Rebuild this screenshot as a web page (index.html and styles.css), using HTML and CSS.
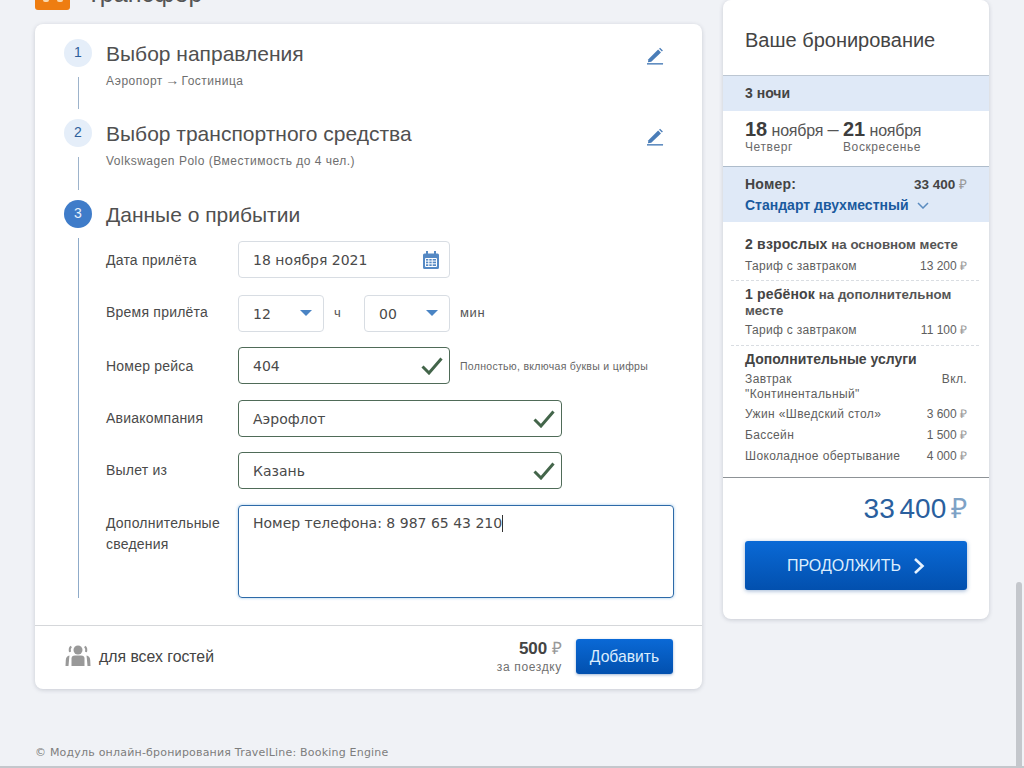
FILE: index.html
```html
<!DOCTYPE html>
<html lang="ru">
<head>
<meta charset="utf-8">
<title>Трансфер</title>
<link rel="stylesheet" href="styles.css">
</head>
<body>
<div class="page">
  <main class="main">
    <div class="head">
      <div class="badge"><i class="spot"></i><i class="spot"></i></div>
      <div class="head-title">Трансфер</div>
    </div>
    <section class="card">
      <div class="steps">
        <div class="step step-a">
          <div class="rail"><div class="num">1</div><div class="line"></div></div>
          <div class="step-body">
            <div class="step-title">Выбор направления</div>
            <div class="step-sub">Аэропорт <span class="arrow">→</span> Гостиница</div>
          </div>
          <svg class="edit" viewBox="0 0 18 18"><path d="M1.500 12.500 11.800 2.200 14.800 5.200 4.500 15 1 15.500Z" fill="#4a7db8"/><path d="M12.800 1.200 13.800 .2 16.800 3.200 15.800 4.200Z" fill="#4a7db8"/><path d="M0 17.300H17" stroke="#4a7db8" stroke-width="1.500"/></svg>
        </div>
        <div class="step step-b">
          <div class="rail"><div class="num">2</div><div class="line"></div></div>
          <div class="step-body">
            <div class="step-title">Выбор транспортного средства</div>
            <div class="step-sub">Volkswagen Polo (Вместимость до 4 чел.)</div>
          </div>
          <svg class="edit edit-low" viewBox="0 0 18 18"><path d="M1.500 12.500 11.800 2.200 14.800 5.200 4.500 15 1 15.500Z" fill="#4a7db8"/><path d="M12.800 1.200 13.800 .2 16.800 3.200 15.800 4.200Z" fill="#4a7db8"/><path d="M0 17.300H17" stroke="#4a7db8" stroke-width="1.500"/></svg>
        </div>
        <div class="step">
          <div class="rail"><div class="num num-active">3</div><div class="line line-active"></div></div>
          <div class="step-body">
            <div class="step-title">Данные о прибытии</div>
            <div class="form">
              <div class="row row-date">
                <div class="label label-low">Дата прилёта</div>
                <div class="field w212"><span>18 ноября 2021</span>
                  <svg class="cal" viewBox="0 0 16 18"><path d="M1.500 2.500H14.500A1.500 1.500 0 0 1 16 4V16.500A1.500 1.500 0 0 1 14.500 18H1.500A1.500 1.500 0 0 1 0 16.500V4A1.500 1.500 0 0 1 1.500 2.500Z" fill="#5589c4"/><rect x="3" y="0" width="2" height="4" fill="#5589c4"/><rect x="11" y="0" width="2" height="4" fill="#5589c4"/><path d="M2.500 7.500H13.500V15.500H2.500ZM2.500 10.100H13.500M2.500 12.800H13.500M5.800 7.500V15.500M9.200 7.500V15.500" fill="none" stroke="#fff" stroke-width="1"/></svg>
                </div>
              </div>
              <div class="row">
                <div class="label label-high">Время прилёта</div>
                <div class="field w86"><span>12</span><i class="tri"></i></div>
                <div class="unit unit-h">ч</div>
                <div class="field w86"><span>00</span><i class="tri"></i></div>
                <div class="unit">мин</div>
              </div>
              <div class="row row-c">
                <div class="label label-low">Номер рейса</div>
                <div class="field ok w212"><span>404</span>
                  <svg class="check" viewBox="0 0 22 18"><path d="M1.500 9.500 8 16 20.500 1.500" fill="none" stroke="#43654a" stroke-width="3"/></svg>
                </div>
                <div class="hint">Полностью, включая буквы и цифры</div>
              </div>
              <div class="row">
                <div class="label">Авиакомпания</div>
                <div class="field ok w324"><span>Аэрофлот</span>
                  <svg class="check" viewBox="0 0 22 18"><path d="M1.500 9.500 8 16 20.500 1.500" fill="none" stroke="#43654a" stroke-width="3"/></svg>
                </div>
              </div>
              <div class="row row-e">
                <div class="label">Вылет из</div>
                <div class="field ok w324"><span>Казань</span>
                  <svg class="check" viewBox="0 0 22 18"><path d="M1.500 9.500 8 16 20.500 1.500" fill="none" stroke="#43654a" stroke-width="3"/></svg>
                </div>
              </div>
              <div class="row row-area">
                <div class="label label-area">Дополнительные сведения</div>
                <div class="area"><span>Номер телефона: 8 987 65 43 210</span><i class="caret"></i></div>
              </div>
            </div>
          </div>
        </div>
      </div>
      <div class="card-foot">
        <svg class="people" viewBox="0 0 26 22"><circle cx="13" cy="5" r="4.500" fill="#999"/><path d="M6.500 21V13.500Q6.500 10.500 10 10.500H16Q19.500 10.500 19.500 13.500V21Z" fill="#999"/><path d="M6.300 1.500Q4 3 5 7M19.700 1.500Q22 3 21 7" fill="none" stroke="#999" stroke-width="2"/><path d="M4.500 10.500Q1 11 .8 15L.5 21H3.500L4.200 13ZM21.500 10.500Q25 11 25.200 15L25.500 21H22.500L21.800 13Z" fill="#999"/></svg>
        <div class="guests">для всех гостей</div>
        <div class="trip">
          <div class="trip-price">500 <span class="rub">₽</span></div>
          <div class="trip-note">за поездку</div>
        </div>
        <div class="add">Добавить</div>
      </div>
    </section>
    <footer class="copy">© Модуль онлайн-бронирования TravelLine: Booking Engine</footer>
  </main>
  <aside class="side">
    <div class="side-title">Ваше бронирование</div>
    <div class="band nights">3 ночи</div>
    <div class="dates">
      <div class="date date-from"><div class="date-main"><b>18</b> ноября <span class="dash">–</span></div><div class="date-day">Четверг</div></div>
      <div class="date"><div class="date-main"><b>21</b> ноября</div><div class="date-day">Воскресенье</div></div>
    </div>
    <div class="band room">
      <div class="between room-top"><b>Номер:</b><span class="room-price">33 400 <span class="rub">₽</span></span></div>
      <div class="room-name">Стандарт двухместный
        <svg class="chev" viewBox="0 0 12 7"><path d="M1 1 6 6 11 1" fill="none" stroke="#5b8cc0" stroke-width="1.500"/></svg>
      </div>
    </div>
    <div class="group group-a">
      <div class="g-title"><b>2 взрослых</b> на основном месте</div>
      <div class="between g-row"><span>Тариф с завтраком</span><span class="amount">13 200 <span class="rub">₽</span></span></div>
    </div>
    <div class="group group-b">
      <div class="g-title"><b>1 ребёнок</b> на дополнительном месте</div>
      <div class="between g-row"><span>Тариф с завтраком</span><span class="amount">11 100 <span class="rub">₽</span></span></div>
    </div>
    <div class="extras">
      <div class="x-title">Дополнительные услуги</div>
      <div class="between x-row x-first"><span class="x-wrap">Завтрак "Континентальный"</span><span>Вкл.</span></div>
      <div class="between x-row"><span>Ужин «Шведский стол»</span><span class="amount">3 600 <span class="rub">₽</span></span></div>
      <div class="between x-row"><span>Бассейн</span><span class="amount">1 500 <span class="rub">₽</span></span></div>
      <div class="between x-row"><span>Шоколадное обертывание</span><span class="amount">4 000 <span class="rub">₽</span></span></div>
    </div>
    <div class="total">33 400 <span class="rub-total">₽</span></div>
    <div class="go">Продолжить
      <svg class="go-chev" viewBox="0 0 12 18"><path d="M2 2 9.500 9 2 16" fill="none" stroke="#e6f2ff" stroke-width="2.600"/></svg>
    </div>
  </aside>
</div>
<div class="vscroll"></div>
<div class="hscroll"></div>
</body>
</html>
```
FILE: styles.css
```css
html, body { margin: 0; padding: 0; height: 768px; overflow: hidden; }
body { background: #f0f2f6; font-family: "Liberation Sans", Arial, sans-serif; color: #444; position: relative; }
.page { display: flex; align-items: flex-start; gap: 21px; padding-left: 35px; }
.main { width: 667px; flex: none; }
.head { display: flex; gap: 16px; height: 36px; margin-top: -26px; margin-bottom: 14px; }
.badge { width: 35px; height: 36px; background: #ee7d11; border-radius: 3px; display: flex; justify-content: center; gap: 8px; padding-top: 24px; box-sizing: border-box; }
.spot { width: 6px; height: 4px; border-radius: 2px; background: #f8d9b0; }
.head-title { font-size: 25px; line-height: 28px; color: #555; padding-top: 5px; }
.card { background: #fff; border-radius: 8px; box-shadow: 0 1px 4px rgba(60, 70, 90, .22); height: 665px; display: flex; flex-direction: column; }
.steps { padding: 15px 38px 27px 29px; border-bottom: 1px solid #d5d7da; flex: 1; }
.step { display: flex; gap: 14px; }
.step-a { height: 80px; }
.step-b { height: 81px; }
.rail { width: 28px; flex: none; display: flex; flex-direction: column; align-items: center; }
.num { width: 28px; height: 28px; border-radius: 50%; background: #e5eef9; color: #2e5f9c; font-size: 14px; line-height: 26px; text-align: center; }
.num-active { background: #3f7cc9; color: #e8f1fb; }
.line { flex: 1; width: 1px; background: #9db3cb; margin: 10px 0; }
.line-active { margin-bottom: 0; background: #8fabc9; }
.step-body { flex: 1; min-width: 0; }
.step-title { font-size: 21px; line-height: 30px; color: #505050; }
.step-sub { font-size: 12px; line-height: 16px; color: #6e6e6e; margin-top: 4px; letter-spacing: .5px; }
.arrow { font-size: 14px; line-height: 12px; letter-spacing: 0; margin: 0 -1.500px; }
.edit { width: 17px; height: 18px; margin-top: 8px; flex: none; }
.edit-low { margin-top: 9px; }
.form { display: flex; flex-direction: column; margin-top: 11px; margin-right: -10px; }
.row { display: flex; align-items: center; height: 37px; margin-bottom: 15px; }
.row-date { margin-bottom: 17px; }
.row-c, .row-e { margin-bottom: 16px; }
.row-area { height: 93px; margin-bottom: 0; align-items: flex-start; }
.label { width: 132px; flex: none; font-size: 14px; line-height: 21px; color: #4a4a4a; letter-spacing: .22px; }
.label-low { padding-top: 2px; }
.label-high { padding-bottom: 2px; }
.label-area { padding-top: 8px; }
.field { box-sizing: border-box; height: 37px; border: 1px solid #d8dde3; border-radius: 4px; display: flex; align-items: center; justify-content: space-between; padding: 1px 10px 0 14px; font: 14px "DejaVu Sans", Verdana, sans-serif; color: #4a4a4a; }
.ok { border-color: #4f6b58; padding-right: 6px; }
.w212 { width: 212px; }
.w86 { width: 86px; }
.w324 { width: 324px; }
.cal { width: 16px; height: 18px; margin-top: -1px; }
.check { width: 22px; height: 18px; margin-top: -1px; }
.tri { width: 0; height: 0; border-left: 6px solid transparent; border-right: 6px solid transparent; border-top: 6px solid #4a84c4; margin: -3px 1px 0 0; }
.unit { font-size: 13px; color: #555; padding-left: 10px; margin-top: -2px; letter-spacing: .6px; }
.unit-h { width: 40px; box-sizing: border-box; }
.hint { font-size: 10.500px; color: #666; padding-left: 10px; letter-spacing: .3px; }
.area { box-sizing: border-box; width: 436px; height: 93px; border: 1px solid #2d6aa8; border-radius: 4px; box-shadow: 0 0 3px rgba(90, 160, 220, .6); padding: 9px 14px; font: 14px/17px "DejaVu Sans", Verdana, sans-serif; color: #4a4a4a; display: flex; align-items: flex-start; }
.caret { display: block; width: 1px; height: 17px; background: #333; }
.card-foot { height: 63px; display: flex; align-items: center; padding: 0 29px 0 30px; flex: none; }
.people { width: 26px; height: 22px; flex: none; margin-top: -3px; }
.guests { font-size: 15.800px; color: #444; margin: -2px 0 0 8px; flex: 1; }
.trip { text-align: right; margin-right: 14px; margin-top: -1px; }
.trip-price { font-size: 17px; line-height: 20px; font-weight: 700; color: #444; }
.trip-note { font-size: 12px; line-height: 16px; color: #707070; letter-spacing: .65px; }
.rub { font-weight: 400; color: #999; }
.add { width: 97px; height: 35px; margin-top: -2px; background: linear-gradient(#0a69d6, #0250ae); border-radius: 3px; box-shadow: 0 1px 3px rgba(40, 90, 160, .45); color: #dcedfd; font-size: 15.700px; line-height: 35px; text-align: center; }
.copy { font: 11px/14px "DejaVu Sans", Verdana, sans-serif; color: #7d7d7d; margin-top: 57px; letter-spacing: .2px; }
.side { width: 266px; height: 619px; flex: none; background: #fff; border-radius: 8px; box-shadow: 0 1px 4px rgba(60, 70, 90, .22); }
.side-title { height: 50px; padding: 25px 22px 0; font-size: 20px; line-height: 30px; color: #444; border-bottom: 1px solid #bcc6d2; }
.band { background: #dfe9f7; padding: 0 22px; }
.nights { height: 35px; font-size: 14px; font-weight: 700; line-height: 35px; color: #444; }
.dates { display: flex; height: 56px; box-sizing: border-box; padding: 8px 22px 0; border-bottom: 1px solid #aebccb; }
.date-from { width: 98px; }
.date-main { font-size: 16px; line-height: 20px; color: #555; white-space: nowrap; letter-spacing: -.2px; }
.date-main b { font-size: 20px; color: #3d3d3d; letter-spacing: 0; }
.dash { font-size: 20px; line-height: 16px; }
.date-day { font-size: 12px; line-height: 13px; color: #6a6a6a; letter-spacing: .6px; }
.room { height: 55px; box-sizing: border-box; padding-top: 8px; }
.between { display: flex; justify-content: space-between; }
.room-top { font-size: 14px; line-height: 18px; color: #444; align-items: baseline; letter-spacing: .2px; }
.room-price { font-size: 13.500px; font-weight: 700; color: #444; letter-spacing: 0; }
.room-name { font-size: 14px; font-weight: 700; line-height: 18px; color: #1a5a9e; margin-top: 2px; display: flex; align-items: center; gap: 8px; }
.chev { width: 12px; height: 7px; }
.group { margin: 0 10px 0 8px; padding: 15px 14px 6px; border-bottom: 1px dashed #d9dde2; }
.group-a .g-row { margin-top: 5px; }
.group-b { padding-top: 6px; padding-bottom: 7px; }
.group-b .g-row { margin-top: 3px; }
.g-title { font-size: 13.300px; font-weight: 700; line-height: 16px; color: #555; }
.g-title b { font-size: 14px; line-height: 14px; color: #444; letter-spacing: .2px; }
.g-row { font-size: 12px; line-height: 16px; color: #5e5e5e; margin-right: -2px; letter-spacing: .3px; }
.amount { letter-spacing: 0; }
.extras { padding: 4px 22px 10px; border-bottom: 1px solid #8d9296; }
.x-title { font-size: 14px; font-weight: 700; line-height: 18px; color: #444; }
.x-row { font-size: 12px; line-height: 15px; color: #5e5e5e; padding: 3px 0; letter-spacing: .38px; }
.x-first { padding-top: 4px; padding-bottom: 2px; }
.x-wrap { width: 130px; }
.total { text-align: right; padding: 14px 22px 0; font-size: 28px; line-height: 34px; color: #2a5f9e; word-spacing: -3px; }
.rub-total { color: #7ea2c6; }
.go { margin: 15px 22px 0; height: 49px; background: linear-gradient(#0a69d6, #0250ae); border-radius: 3px; box-shadow: 0 1px 4px rgba(40, 90, 160, .45); color: #dcedfd; font-size: 16px; text-transform: uppercase; display: flex; align-items: center; justify-content: center; gap: 12px; }
.go-chev { width: 12px; height: 18px; }
.vscroll { position: absolute; left: 1016px; top: 582px; width: 6px; height: 186px; background: #c4c7cc; border-radius: 3px 3px 0 0; }
.hscroll { position: absolute; left: 0; right: 0; top: 766px; height: 2px; background: #c4c7cc; }
```
